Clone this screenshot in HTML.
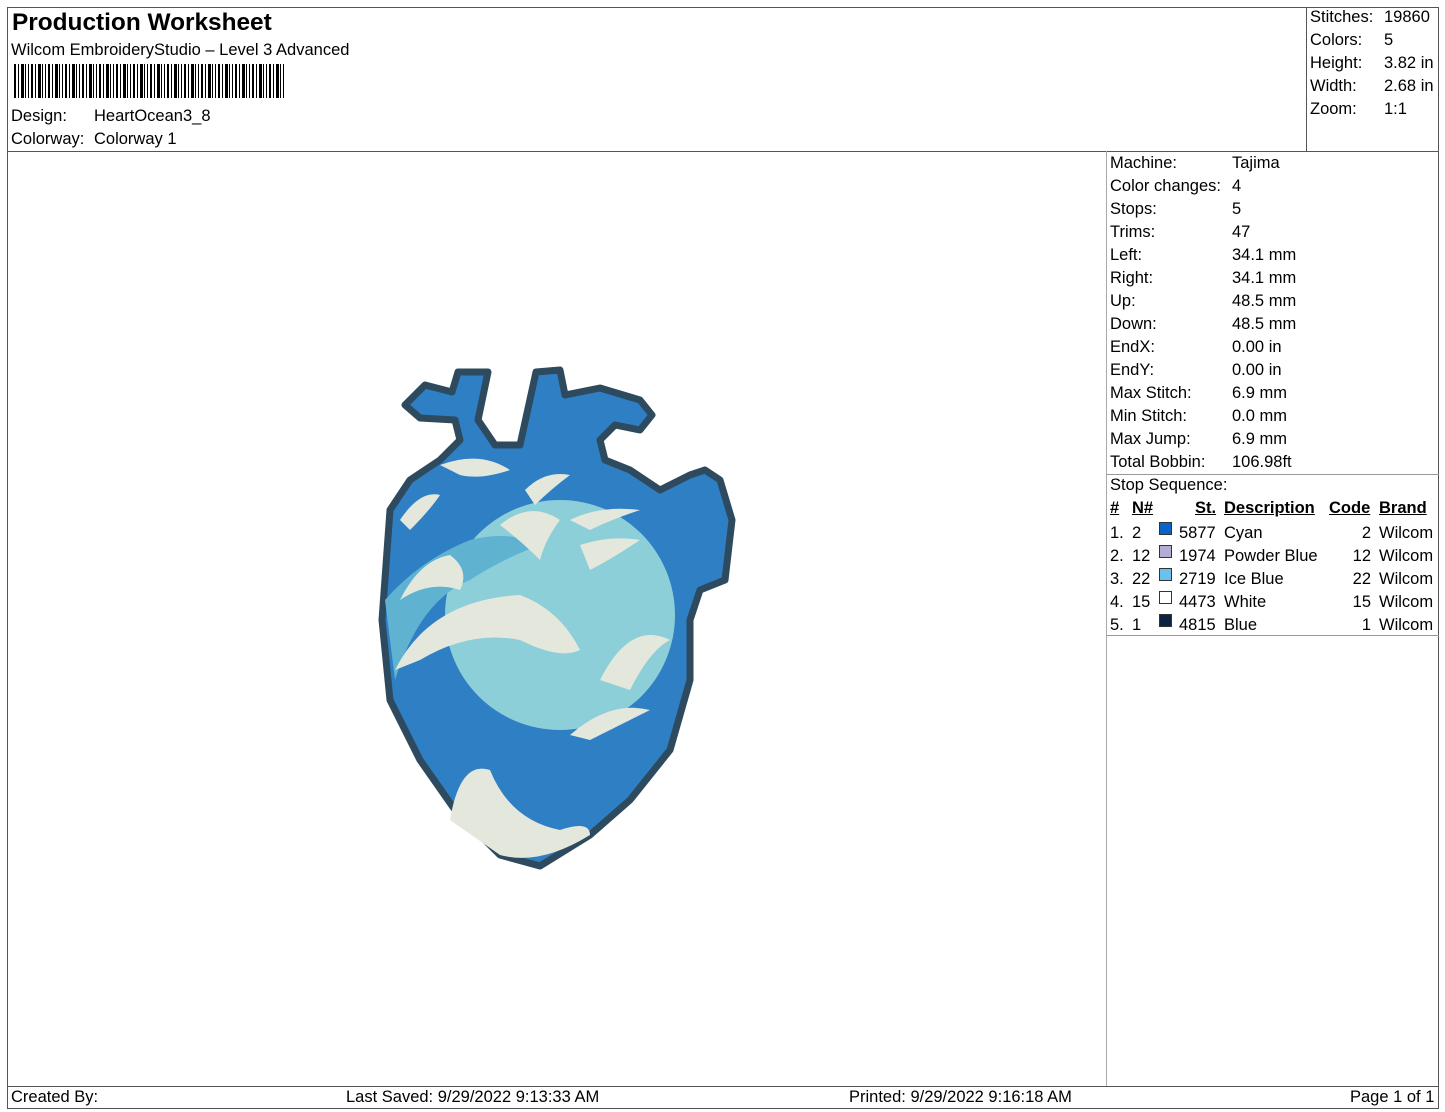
<!DOCTYPE html>
<html><head><meta charset="utf-8"><style>
body{margin:0;width:1445px;height:1112px;background:#fff;font-family:"Liberation Sans",Arial,sans-serif;color:#000;position:relative;overflow:hidden}
.a{position:absolute;white-space:nowrap;font-size:16.5px;line-height:18px}
.l{position:absolute;background:#555}
.u{text-decoration:underline;font-weight:bold}
.sw{position:absolute;width:13px;height:13px;border:1px solid #333;box-sizing:border-box}
</style></head><body>
<div class="l" style="left:7px;top:7px;width:1432px;height:1px"></div>
<div class="l" style="left:7px;top:7px;width:1px;height:1102px"></div>
<div class="l" style="left:1438px;top:7px;width:1px;height:1102px"></div>
<div class="l" style="left:7px;top:1108px;width:1432px;height:1px"></div>
<div class="l" style="left:7px;top:151px;width:1432px;height:1px"></div>
<div class="l" style="left:1306px;top:7px;width:1px;height:145px"></div>
<div class="l" style="left:1106px;top:151px;width:1px;height:936px;background:#aaa"></div>
<div class="l" style="left:1106px;top:474px;width:333px;height:1px;background:#999"></div>
<div class="l" style="left:1106px;top:635px;width:333px;height:1px;background:#999"></div>
<div class="l" style="left:7px;top:1086px;width:1432px;height:1px"></div>

<div class="a" style="left:12px;top:9px;font-size:24.4px;line-height:27px;font-weight:bold">Production Worksheet</div>
<div class="a" style="left:11px;top:41px">Wilcom EmbroideryStudio – Level 3 Advanced</div>
<div style="position:absolute;left:14px;top:64px;width:271px;height:34px;background:repeating-linear-gradient(90deg,#000 0 2px,#fff 2px 4px,#000 4px 5px,#fff 5px 7px,#000 7px 10px,#fff 10px 11px,#000 11px 12px,#fff 12px 14px,#000 14px 15px,#fff 15px 17px)"></div>
<div class="a" style="left:11px;top:107px">Design:</div><div class="a" style="left:94px;top:107px">HeartOcean3_8</div>
<div class="a" style="left:11px;top:130px">Colorway:</div><div class="a" style="left:94px;top:130px">Colorway 1</div>

<div class="a" style="left:1310px;top:8px">Stitches:</div><div class="a" style="left:1384px;top:8px">19860</div>
<div class="a" style="left:1310px;top:31px">Colors:</div><div class="a" style="left:1384px;top:31px">5</div>
<div class="a" style="left:1310px;top:54px">Height:</div><div class="a" style="left:1384px;top:54px">3.82 in</div>
<div class="a" style="left:1310px;top:77px">Width:</div><div class="a" style="left:1384px;top:77px">2.68 in</div>
<div class="a" style="left:1310px;top:100px">Zoom:</div><div class="a" style="left:1384px;top:100px">1:1</div>

<div class="a" style="left:1110px;top:152px;line-height:23px">Machine:<br>Color changes:<br>Stops:<br>Trims:<br>Left:<br>Right:<br>Up:<br>Down:<br>EndX:<br>EndY:<br>Max Stitch:<br>Min Stitch:<br>Max Jump:<br>Total Bobbin:<br>Stop Sequence:</div>
<div class="a" style="left:1232px;top:152px;line-height:23px">Tajima<br>4<br>5<br>47<br>34.1 mm<br>34.1 mm<br>48.5 mm<br>48.5 mm<br>0.00 in<br>0.00 in<br>6.9 mm<br>0.0 mm<br>6.9 mm<br>106.98ft</div>

<div class="a u" style="left:1110px;top:499px">#</div>
<div class="a u" style="left:1132px;top:499px">N#</div>
<div class="a u" style="left:1195px;top:499px">St.</div>
<div class="a u" style="left:1224px;top:499px">Description</div>
<div class="a u" style="left:1329px;top:499px">Code</div>
<div class="a u" style="left:1379px;top:499px">Brand</div>
<div class="a" style="left:1110px;top:522px;line-height:23px">1.<br>2.<br>3.<br>4.<br>5.</div>
<div class="a" style="left:1132px;top:522px;line-height:23px">2<br>12<br>22<br>15<br>1</div>
<div class="sw" style="left:1159px;top:522px;background:#0a64c8"></div>
<div class="sw" style="left:1159px;top:545px;background:#b4acd4"></div>
<div class="sw" style="left:1159px;top:568px;background:#6cc0ec"></div>
<div class="sw" style="left:1159px;top:591px;background:#fff"></div>
<div class="sw" style="left:1159px;top:614px;background:#0c2442"></div>
<div class="a" style="left:1179px;top:522px;line-height:23px">5877<br>1974<br>2719<br>4473<br>4815</div>
<div class="a" style="left:1224px;top:522px;line-height:23px">Cyan<br>Powder Blue<br>Ice Blue<br>White<br>Blue</div>
<div class="a" style="left:1330px;top:522px;line-height:23px;width:41px;text-align:right">2<br>12<br>22<br>15<br>1</div>
<div class="a" style="left:1379px;top:522px;line-height:23px">Wilcom<br>Wilcom<br>Wilcom<br>Wilcom<br>Wilcom</div>

<div class="a" style="left:11px;top:1088px">Created By:</div>
<div class="a" style="left:346px;top:1088px">Last Saved: 9/29/2022 9:13:33 AM</div>
<div class="a" style="left:849px;top:1088px">Printed: 9/29/2022 9:16:18 AM</div>
<div class="a" style="left:1350px;top:1088px">Page 1 of 1</div>

<svg style="position:absolute;left:0;top:0" width="1445" height="1112">
<path d="M405 405 L425 385 L452 392 L458 372 L488 372 L478 420 L495 445 L520 445 L536 372 L560 370 L565 395 L600 388 L640 400 L652 415 L640 430 L615 425 L600 440 L605 460 L630 470 L660 490 L690 475 L705 470 L720 480 L732 520 L725 580 L700 590 L690 620 L690 680 L670 750 L630 800 L590 835 L540 866 L500 855 L455 810 L420 760 L390 700 L382 620 L390 510 L410 480 L440 460 L460 440 L455 420 L420 418 Z" fill="#2f7fc4" stroke="#2e4a5e" stroke-width="7" stroke-linejoin="round"/>
<circle cx="560" cy="615" r="115" fill="#8ccfd8"/>
<path d="M385 600 Q420 560 470 540 Q510 530 540 545 Q500 560 470 580 Q420 600 395 680 Z" fill="#5fb2d0"/>
<path d="M395 670 Q430 600 520 595 Q560 610 580 650 Q560 660 520 640 Q470 630 420 660 Z" fill="#e4e8dc"/>
<path d="M400 600 Q420 560 450 555 Q470 570 460 590 Q430 580 400 600 Z" fill="#e4e8dc"/>
<path d="M500 525 Q530 500 560 520 Q545 540 540 560 Q520 540 500 525 Z" fill="#e4e8dc"/>
<path d="M580 545 Q610 535 640 540 Q610 560 590 570 Z" fill="#e4e8dc"/>
<path d="M600 680 Q630 620 670 640 Q650 650 630 690 Z" fill="#e4e8dc"/>
<path d="M570 735 Q610 700 650 710 Q630 720 590 740 Z" fill="#e4e8dc"/>
<path d="M450 820 Q460 760 490 770 Q510 820 560 830 Q590 820 590 835 Q540 866 500 855 Z" fill="#e4e8dc"/>
<path d="M400 520 Q420 490 440 495 Q430 510 410 530 Z M440 465 Q480 450 510 470 Q480 480 460 475 Z M525 490 Q545 470 570 475 Q550 490 535 505 Z M570 520 Q600 505 640 510 Q610 520 590 530 Z" fill="#e4e8dc"/>
</svg>
</body></html>
